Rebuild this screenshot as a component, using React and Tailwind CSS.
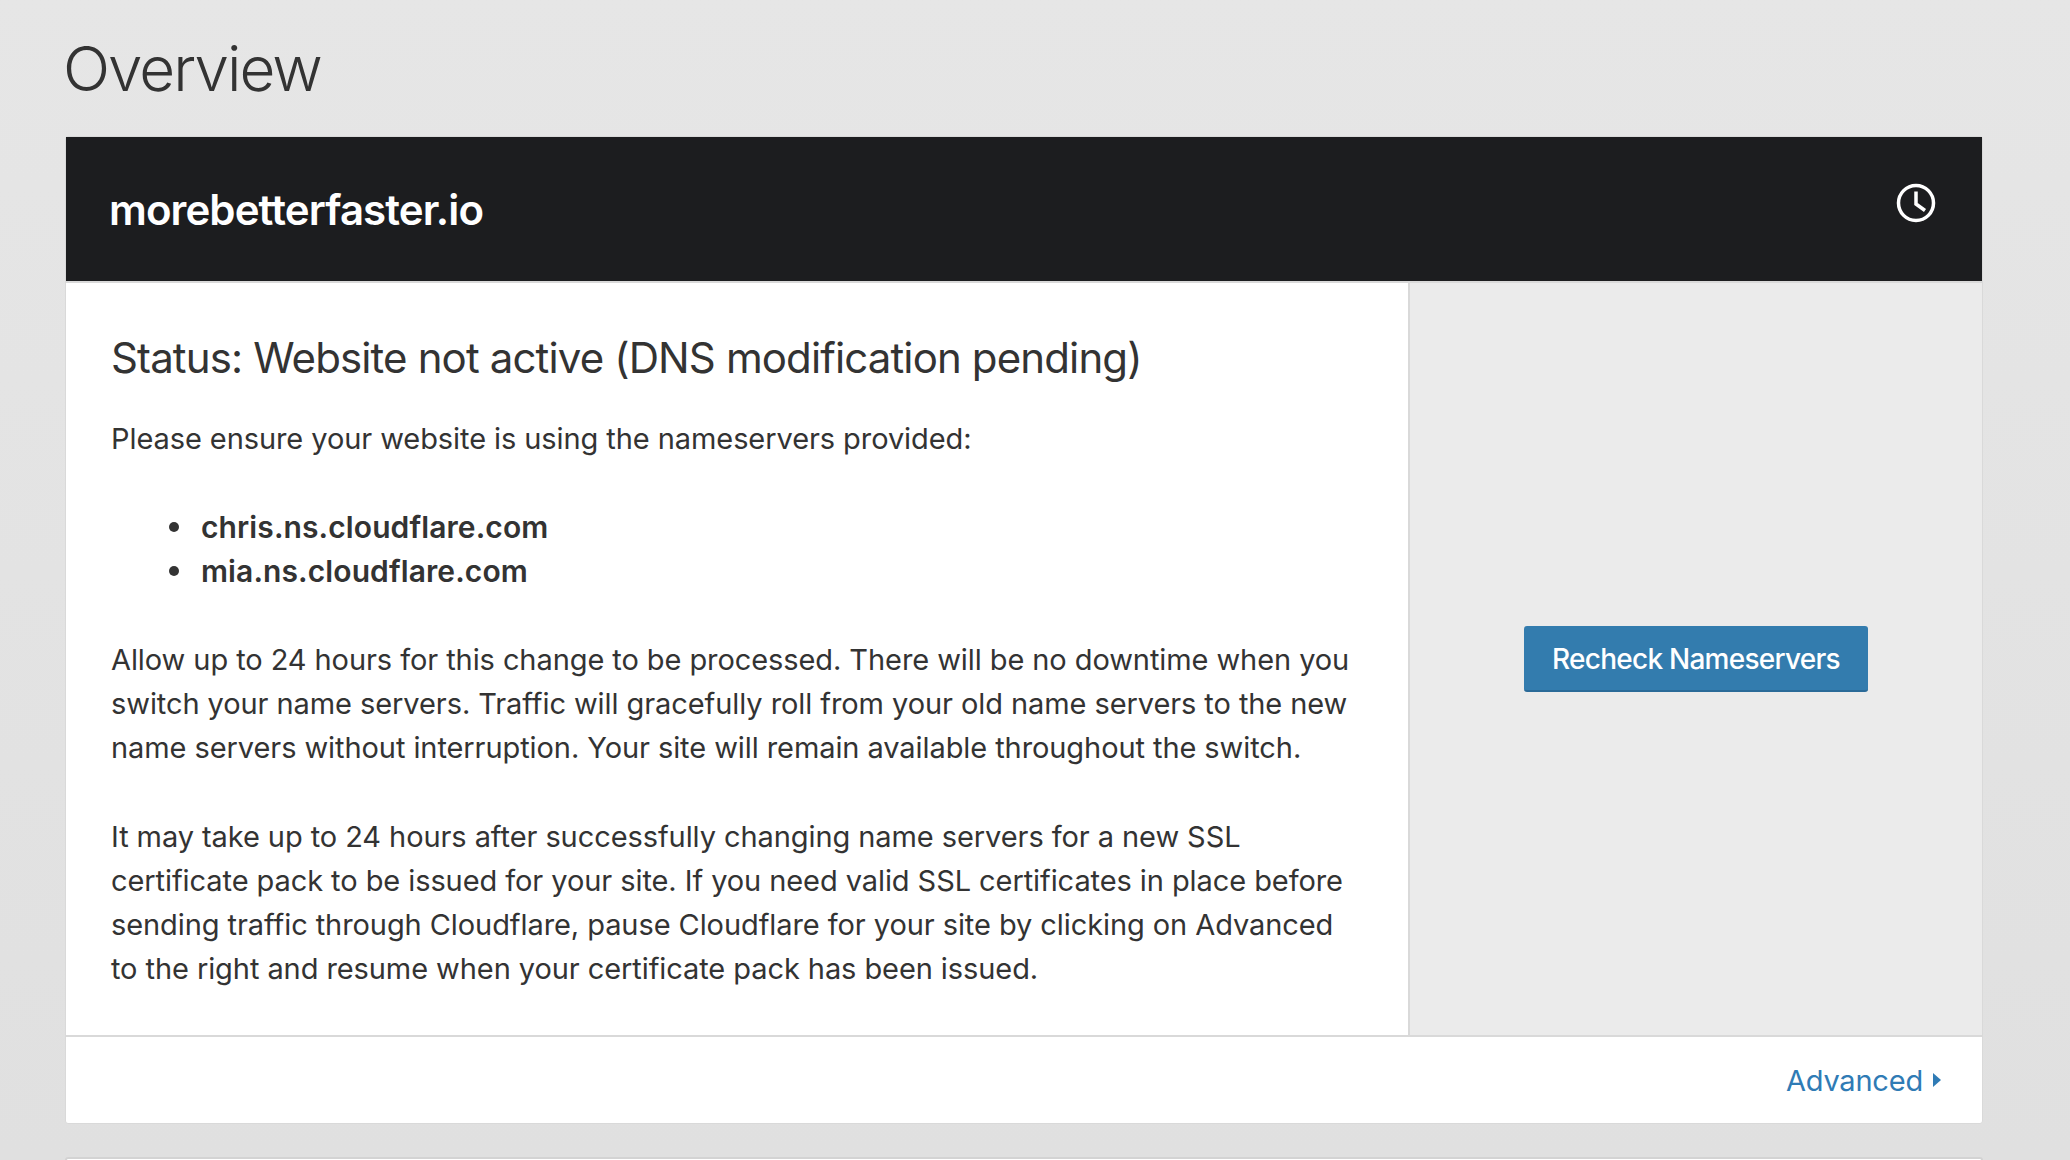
import React from "react";

function ClockIcon() {
  return (
    <svg width="40" height="40" viewBox="0 0 40 40" fill="none" stroke="white" strokeWidth="3.5">
      <circle cx="20" cy="20" r="17.5" />
      <path d="M20 8.5V21l9 6.5" />
    </svg>
  );
}

function Nameserver({ children }) {
  return (
    <li className="flex items-center">
      <span className="ml-[58px] h-[10px] w-[10px] rounded-full bg-[#333333]" />
      <span className="ml-[22px]">{children}</span>
    </li>
  );
}

export default function App() {
  return (
    <div className="h-[1160px] overflow-hidden bg-gradient-to-b from-[#e6e6e6] to-[#e0e0e0] px-[65px] font-['Inter',sans-serif] text-[#333333]">
      <h1 className="-ml-[2px] h-[136px] pt-[30px] text-[62px] leading-[78px] font-light tracking-[-2px]">Overview</h1>

      <div className="w-[1918px] rounded-[3px] border border-[#d9d9d9] bg-white">
        <div className="flex h-[144px] items-start justify-between bg-[#1c1d1f] pt-[45px] pr-[46px] pl-[43px] text-white">
          <h2 className="text-[42px] leading-[56px] font-semibold tracking-[-0.9px]">morebetterfaster.io</h2>
          <span className="mt-[1px]">
            <ClockIcon />
          </span>
        </div>

        <div className="flex h-[756px] border-t-2 border-b-2 border-[#d9d9d9]">
          <div className="w-[1344px] border-r-2 border-[#d9d9d9] pt-[49px] pr-[50px] pl-[45px] text-[29px] leading-[44px] tracking-[-0.08px]">
            <h3 className="mb-[33px] text-[42px] leading-[52px] tracking-[-0.87px]">Status: Website not active (DNS modification pending)</h3>
            <p>Please ensure your website is using the nameservers provided:</p>
            <ul className="mt-[44px] mb-[45px] text-[30px] font-semibold tracking-[0.1px]">
              <Nameserver>chris.ns.cloudflare.com</Nameserver>
              <Nameserver>mia.ns.cloudflare.com</Nameserver>
            </ul>
            <p className="mb-[45px]">
              Allow up to 24 hours for this change to be processed. There will be no downtime when you switch your name servers. Traffic will gracefully roll from your old name servers to the new name servers without interruption. Your site will remain available throughout the switch.
            </p>
            <p>
              It may take up to 24 hours after successfully changing name servers for a new SSL certificate pack to be issued for your site. If you need valid SSL certificates in place before sending traffic through Cloudflare, pause Cloudflare for your site by clicking on Advanced to the right and resume when your certificate pack has been issued.
            </p>
          </div>
          <div className="flex flex-1 items-center justify-center bg-[#ebebeb]">
            <button
              type="button"
              className="h-[66px] w-[344px] rounded-[3px] border-b-2 border-[#2a6a98] bg-[#337cae] pt-[2px] text-[28px] font-medium tracking-[-0.75px] text-white"
            >
              Recheck Nameservers
            </button>
          </div>
        </div>

        <div className="flex h-[86px] items-center justify-end gap-[10px] pt-[2px] pr-[41px] text-[29px] tracking-[-0.2px] text-[#2f7bb5]">
          <span>Advanced</span>
          <svg width="8" height="14" viewBox="0 0 8 14" className="mt-[-2px]">
            <path d="M0 0l8 7-8 7z" fill="#2f7bb5" />
          </svg>
        </div>
      </div>

      <div className="mt-[33px] h-[20px] w-[1918px] rounded-[3px] border-2 border-[#d3d3d3] bg-white" />
    </div>
  );
}
